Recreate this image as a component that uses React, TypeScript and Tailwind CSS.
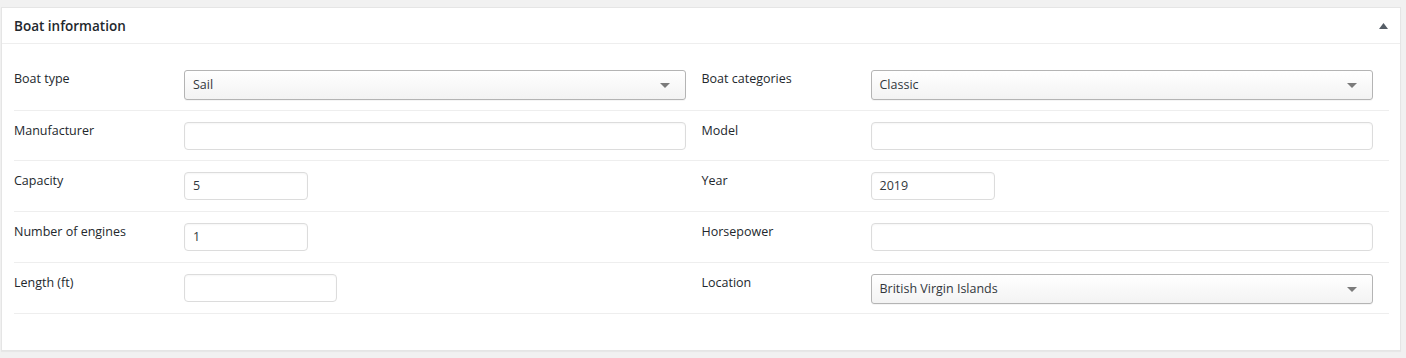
type Field =
  | { label: string; kind: "select"; value: string }
  | { label: string; kind: "input"; value: string; size?: "sm" | "md" | "full" };

const rows: [Field, Field][] = [
  [
    { label: "Boat type", kind: "select", value: "Sail" },
    { label: "Boat categories", kind: "select", value: "Classic" },
  ],
  [
    { label: "Manufacturer", kind: "input", value: "" },
    { label: "Model", kind: "input", value: "" },
  ],
  [
    { label: "Capacity", kind: "input", value: "5", size: "sm" },
    { label: "Year", kind: "input", value: "2019", size: "sm" },
  ],
  [
    { label: "Number of engines", kind: "input", value: "1", size: "sm" },
    { label: "Horsepower", kind: "input", value: "" },
  ],
  [
    { label: "Length (ft)", kind: "input", value: "", size: "md" },
    { label: "Location", kind: "select", value: "British Virgin Islands" },
  ],
];

const rowHeights = ["h-[52px]", "h-[50px]", "h-[51px]", "h-[51px]", "h-[51px]"];

function SelectBox({ value }: { value: string }) {
  return (
    <div className="flex h-[30px] w-full items-center justify-between rounded-[3px] border border-[#b4b4b4] bg-gradient-to-b from-white to-[#f3f3f3] pl-[8px] pr-[15px] shadow-[0_1px_0_rgba(0,0,0,0.04)]">
      <span className="pt-px text-[12.5px] text-[#32373c]">{value}</span>
      <svg width="10" height="5" viewBox="0 0 10 5" className="mt-px">
        <path d="M0 0h10L5 5z" fill="#7b7b7b" />
      </svg>
    </div>
  );
}

function TextBox({ value, size = "full" }: { value: string; size?: "sm" | "md" | "full" }) {
  const width = size === "sm" ? "w-[124px]" : size === "md" ? "w-[153px]" : "w-full";
  return (
    <div
      className={`${width} flex h-[28px] items-center rounded-[4px] border border-[#dcdcdc] bg-white px-[8px] shadow-[inset_0_1px_2px_rgba(0,0,0,0.04)]`}
    >
      <span className="pt-px text-[12.5px] text-[#32373c]">{value}</span>
    </div>
  );
}

function FieldCell({ field, right }: { field: Field; right?: boolean }) {
  return (
    <div className="flex items-start pr-[16px]">
      <div
        className={`${right ? "w-[169px]" : "w-[170px]"} shrink-0 text-[12.5px] leading-[18px] text-[#23282d]`}
      >
        {field.label}
      </div>
      <div className="flex-1">
        {field.kind === "select" ? (
          <SelectBox value={field.value} />
        ) : (
          <TextBox value={field.value} size={field.size} />
        )}
      </div>
    </div>
  );
}

export default function App() {
  return (
    <div className="h-[358px] bg-[#f1f1f1] pt-[7px] pl-[1px] pr-[5px] font-['Open_Sans','Noto_Sans',sans-serif]">
      <div className="border border-[#e5e5e5] bg-white shadow-[0_1px_1px_rgba(0,0,0,0.04)]">
        <div className="flex h-[36px] items-center justify-between border-b border-[#eeeeee] pl-[12px] pr-[12px]">
          <h2 className="pt-[2px] text-[13.5px] font-semibold text-[#23282d]">Boat information</h2>
          <svg width="9" height="6" viewBox="0 0 9 6">
            <path d="M4.5 0L9 6H0z" fill="#555d66" />
          </svg>
        </div>

        <div className="px-[12px] pt-[15px] pb-[36px] pr-[11px]">
          {rows.map((pair, i) => (
            <div
              key={i}
              className={`${rowHeights[i]} grid grid-cols-2 items-start border-b border-[#eeeeee] pt-[11px]`}
            >
              <FieldCell field={pair[0]} />
              <FieldCell field={pair[1]} right />
            </div>
          ))}
        </div>
      </div>
    </div>
  );
}
